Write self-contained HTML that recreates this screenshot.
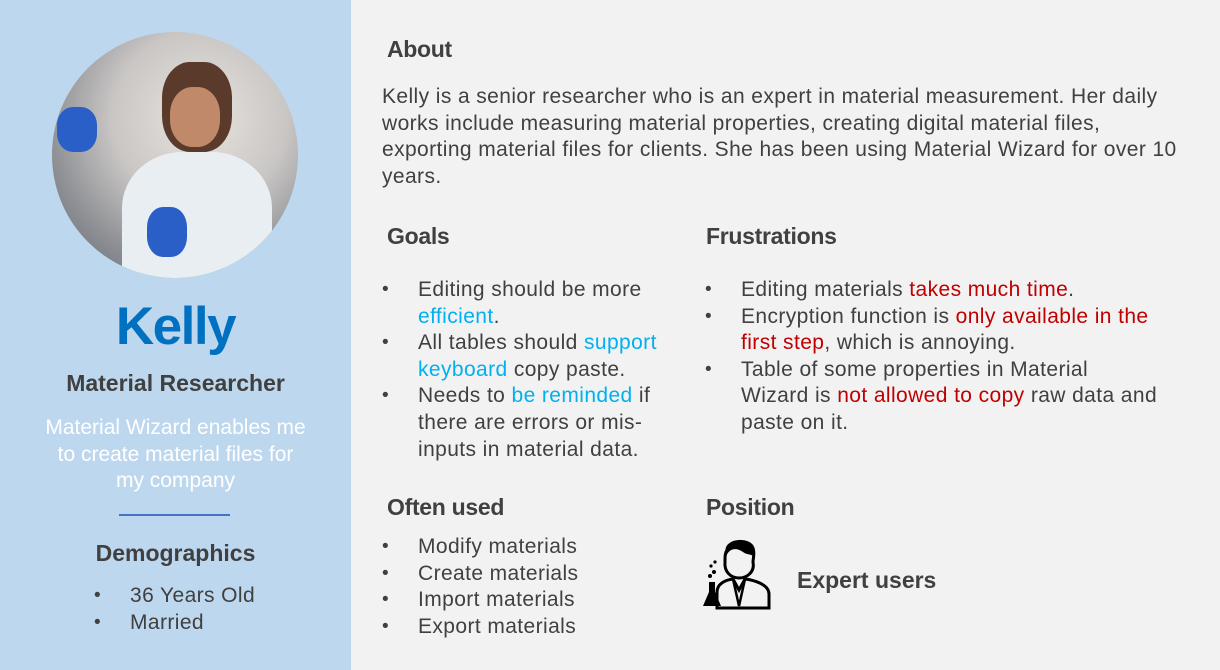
<!DOCTYPE html>
<html><head><meta charset="utf-8"><style>
*{margin:0;padding:0;box-sizing:border-box}
body{width:1220px;height:670px;background:#f2f2f2;font-family:"Liberation Sans",sans-serif;color:#404040;position:relative;overflow:hidden}
.l{position:absolute;left:0;top:0;width:351px;height:670px;background:#bdd7ee}
.a{position:absolute}
h2{font-size:23px;font-weight:bold;color:#404040;position:absolute;letter-spacing:-0.3px}
.t{font-size:21px;line-height:26.6px;position:absolute;white-space:nowrap;letter-spacing:0.4px}
ul{list-style:none;position:absolute;font-size:21px;line-height:26.6px;white-space:nowrap;letter-spacing:0.4px}
ul li{position:relative;padding-left:36px}
ul li:before{content:"•";position:absolute;left:0;font-size:19px}
.b{color:#00b0f0}.r{color:#c00000}
</style></head><body>
<div class="l"></div>
<div class="a" style="left:52px;top:32px;width:246px;height:246px;border-radius:50%;background:radial-gradient(circle at 60% 35%,#e9e4df 0%,#c9c6c4 40%,#8d8f94 70%,#5d6270 100%);overflow:hidden">
<div class="a" style="left:110px;top:30px;width:70px;height:90px;border-radius:40%;background:#5a3a2a"></div>
<div class="a" style="left:118px;top:55px;width:50px;height:60px;border-radius:45%;background:#c08a6a"></div>
<div class="a" style="left:70px;top:120px;width:150px;height:140px;border-radius:40% 40% 0 0;background:#e8eef2"></div>
<div class="a" style="left:5px;top:75px;width:40px;height:45px;border-radius:40%;background:#2a5fc8"></div>
<div class="a" style="left:95px;top:175px;width:40px;height:50px;border-radius:40%;background:#2a5fc8"></div>
</div>
<div class="a" style="left:0;width:351px;top:296px;text-align:center;font-size:53px;font-weight:bold;color:#0070c0;letter-spacing:-1.5px">Kelly</div>
<div class="a" style="left:0;width:351px;top:370px;text-align:center;font-size:23px;font-weight:bold">Material Researcher</div>
<div class="a" style="left:0;width:351px;top:415px;text-align:center;font-size:21px;line-height:26.6px;color:#fff">Material Wizard enables me<br>to create material files for<br>my company</div>
<div class="a" style="left:119px;top:514px;width:111px;height:2px;background:#4472c4"></div>
<div class="a" style="left:0;width:351px;top:540px;text-align:center;font-size:23px;font-weight:bold">Demographics</div>
<ul style="left:94px;top:583px"><li>36 Years Old</li><li>Married</li></ul>

<h2 style="left:387px;top:36px">About</h2>
<div class="t" style="left:382px;top:84px">Kelly is a senior researcher who is an expert in material measurement. Her daily<br>works include measuring material properties, creating digital material files,<br>exporting material files for clients. She has been using Material Wizard for over 10<br>years.</div>
<h2 style="left:387px;top:223px">Goals</h2>
<ul style="left:382px;top:277px"><li>Editing should be more<br><span class="b">efficient</span>.</li><li>All tables should <span class="b">support</span><br><span class="b">keyboard</span> copy paste.</li><li>Needs to <span class="b">be reminded</span> if<br>there are errors or mis-<br>inputs in material data.</li></ul>
<h2 style="left:706px;top:223px">Frustrations</h2>
<ul style="left:705px;top:277px"><li>Editing materials <span class="r">takes much time</span>.</li><li>Encryption function is <span class="r">only available in the</span><br><span class="r">first step</span>, which is annoying.</li><li>Table of some properties in Material<br>Wizard is <span class="r">not allowed to copy</span> raw data and<br>paste on it.</li></ul>
<h2 style="left:387px;top:494px">Often used</h2>
<ul style="left:382px;top:534px"><li>Modify materials</li><li>Create materials</li><li>Import materials</li><li>Export materials</li></ul>
<h2 style="left:706px;top:494px">Position</h2>
<svg class="a" style="left:703px;top:538px" width="70" height="72" viewBox="0 0 70 72">
<path d="M24 12 C24 2 46 0 50 10 C52 16 50 20 50 24 C52 34 44 40 36 40 C28 40 21 34 22 24 C22 18 22 15 24 12Z" fill="none" stroke="#000" stroke-width="3"/>
<path d="M23 20 C24 12 32 8 40 14 C44 17 48 16 50 18 L50 8 C44 0 26 2 23 10Z" fill="#000"/>
<path d="M14 70 L14 54 C14 46 22 42 30 41 L36 52 L42 41 C50 42 66 46 66 56 L66 70Z" fill="none" stroke="#000" stroke-width="3"/>
<path d="M30 41 L36 68 L42 41" fill="none" stroke="#000" stroke-width="2.5"/>
<path d="M6 44 L12 44 L12 54 L18 68 L0 68 L6 54Z" fill="#000"/>
<circle cx="7" cy="38" r="2" fill="#000"/><circle cx="11" cy="34" r="2" fill="#000"/><circle cx="8" cy="28" r="1.6" fill="#000"/><circle cx="12" cy="24" r="1.6" fill="#000"/>
</svg>
<div class="a" style="left:797px;top:567px;font-size:23px;font-weight:bold">Expert users</div>
</body></html>
